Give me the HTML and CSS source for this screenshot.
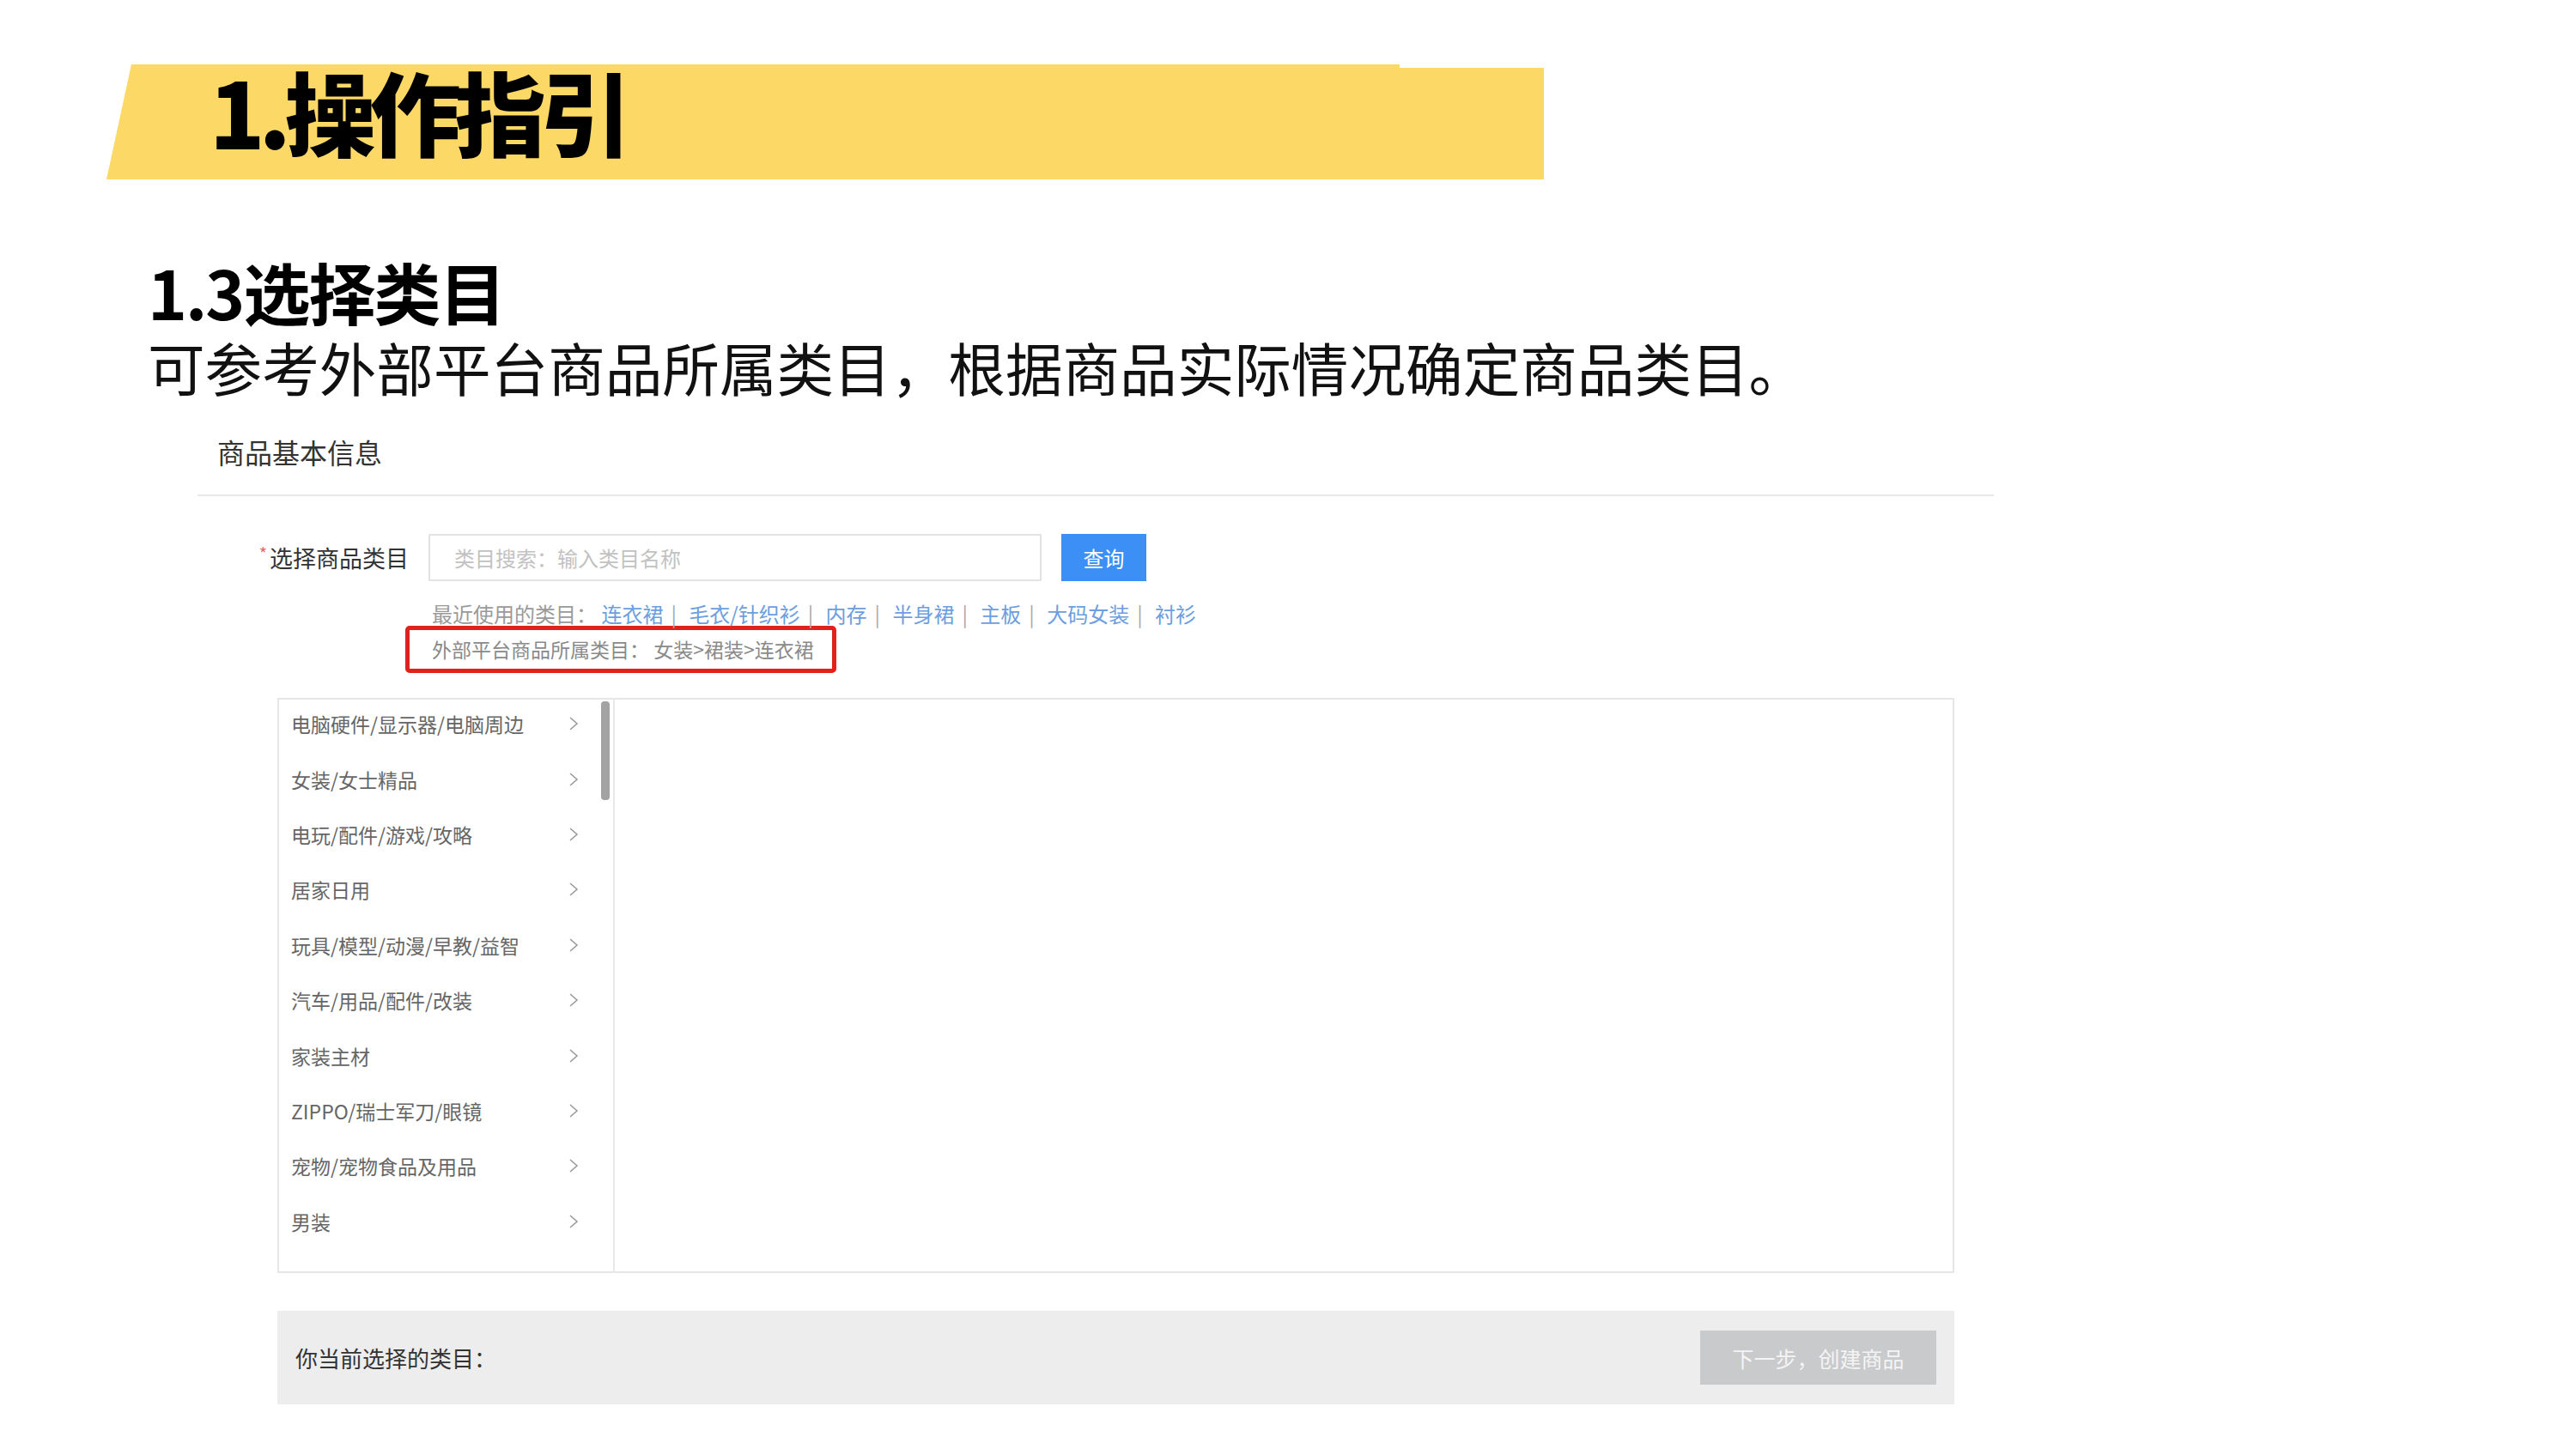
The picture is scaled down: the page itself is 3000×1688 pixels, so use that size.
FILE: index.html
```html
<!DOCTYPE html>
<html lang="zh-CN">
<head>
    <meta charset="UTF-8">
    <meta name="viewport" content="width=device-width, initial-scale=1.0">
    <title>1.操作指引</title>
    <link rel="stylesheet" href="styles.css">
</head>
<body>
    <div class="slide">
        <div class="banner">
            <h1>1.操作指引</h1>
        </div>

        <div class="section">
            <h2>1.3选择类目</h2>
            <p class="desc">可参考外部平台商品所属类目，根据商品实际情况确定商品类目。</p>
        </div>

        <div class="shot">
            <div class="shot-header">商品基本信息</div>

            <div class="form-row">
                <label class="form-label"><span class="star">*</span>选择商品类目</label>
                <input type="text" class="search-input" placeholder="类目搜索：输入类目名称" readonly>
                <button class="search-btn">查询</button>
            </div>

            <div class="hints">
                <div class="recent">
                    最近使用的类目：
                    <a>连衣裙</a><span class="sep">|</span>
                    <a>毛衣/针织衫</a><span class="sep">|</span>
                    <a>内存</a><span class="sep">|</span>
                    <a>半身裙</a><span class="sep">|</span>
                    <a>主板</a><span class="sep">|</span>
                    <a>大码女装</a><span class="sep">|</span>
                    <a>衬衫</a>
                </div>
                <div class="outer-cat">外部平台商品所属类目： 女装&gt;裙装&gt;连衣裙</div>
            </div>

            <div class="panel">
                <div class="cat-col">
                    <ul class="cat-list">
                        <li>电脑硬件/显示器/电脑周边<svg class="chev" viewBox="0 0 12 20"><path d="M2 3 L10 10 L2 17"/></svg></li>
                        <li>女装/女士精品<svg class="chev" viewBox="0 0 12 20"><path d="M2 3 L10 10 L2 17"/></svg></li>
                        <li>电玩/配件/游戏/攻略<svg class="chev" viewBox="0 0 12 20"><path d="M2 3 L10 10 L2 17"/></svg></li>
                        <li>居家日用<svg class="chev" viewBox="0 0 12 20"><path d="M2 3 L10 10 L2 17"/></svg></li>
                        <li>玩具/模型/动漫/早教/益智<svg class="chev" viewBox="0 0 12 20"><path d="M2 3 L10 10 L2 17"/></svg></li>
                        <li>汽车/用品/配件/改装<svg class="chev" viewBox="0 0 12 20"><path d="M2 3 L10 10 L2 17"/></svg></li>
                        <li>家装主材<svg class="chev" viewBox="0 0 12 20"><path d="M2 3 L10 10 L2 17"/></svg></li>
                        <li>ZIPPO/瑞士军刀/眼镜<svg class="chev" viewBox="0 0 12 20"><path d="M2 3 L10 10 L2 17"/></svg></li>
                        <li>宠物/宠物食品及用品<svg class="chev" viewBox="0 0 12 20"><path d="M2 3 L10 10 L2 17"/></svg></li>
                        <li>男装<svg class="chev" viewBox="0 0 12 20"><path d="M2 3 L10 10 L2 17"/></svg></li>
                    </ul>
                    <div class="scroll-track"><div class="thumb"></div></div>
                </div>
                <div class="sub-col"></div>
            </div>

            <div class="bottom-bar">
                <span>你当前选择的类目：</span>
                <button class="next-btn">下一步，创建商品</button>
            </div>
        </div>
    </div>
</body>
</html>
```

FILE: styles.css
```css
body {
    margin: 0;
    background-color: #fff;
    font-family: "Noto Sans CJK SC", "Noto Sans", sans-serif;
}
.slide {
    width: 3000px;
    height: 1688px;
    overflow: hidden;
    background-color: #fff;
}

/* top title banner */
.banner {
    margin: 75px 0 0 124px;
    width: 1674px;
    height: 134px;
    background-color: #fcd866;
    clip-path: polygon(29px 0, 1506px 0, 1506px 4px, 100% 4px, 100% 100%, 0 100%);
    display: flex;
    align-items: flex-start;
}
.banner h1 {
    margin: 0 0 0 120px;
    font-size: 106px;
    font-weight: 900;
    letter-spacing: -7px;
    line-height: 1;
    color: #000;
}

.section {
    padding-left: 172px;
}
.section h2 {
    margin: 85px 0 0;
    font-size: 78px;
    line-height: 90px;
    font-weight: 700;
    letter-spacing: -2px;
    color: #000;
}
.desc {
    margin: 3px 0 0;
    font-size: 66.6px;
    line-height: 80px;
    color: #111;
}

/* embedded screenshot */
.shot {
    margin-left: 230px;
    width: 2092px;
}
.shot-header {
    margin-top: 34px;
    padding: 0 0 25px 23px;
    font-size: 32px;
    line-height: 50px;
    color: #333;
    border-bottom: 2px solid #e8e8e8;
}
.form-row {
    margin-top: 44px;
    display: flex;
    align-items: center;
}
.form-label {
    width: 246px;
    text-align: right;
    font-size: 27px;
    color: #333;
}
.star {
    color: #e86a6a;
    font-size: 20px;
    vertical-align: top;
    margin-right: 3px;
}
.search-input {
    margin-left: 23px;
    width: 714px;
    height: 55px;
    box-sizing: border-box;
    border: 2px solid #e3e3e3;
    padding: 0 28px;
    font-family: inherit;
    font-size: 24px;
    outline: none;
}
.search-input::placeholder {
    color: #c2c2c2;
}
.search-btn {
    margin-left: 23px;
    width: 99px;
    height: 55px;
    border: none;
    background-color: #3b8ff5;
    color: #fff;
    font-family: inherit;
    font-size: 24px;
}

.hints {
    margin-left: 242px;
}
.recent {
    margin-top: 23px;
    padding-left: 31px;
    font-size: 24px;
    line-height: 30px;
    color: #9a9a9a;
}
.recent a {
    color: #6c9ee0;
}
.recent .sep {
    margin: 0 9px;
    color: #aaa;
}
.outer-cat {
    margin-top: -1px;
    width: 502px;
    height: 55px;
    box-sizing: border-box;
    border: 5px solid #e3211c;
    border-radius: 5px;
    padding-left: 26px;
    font-size: 23px;
    line-height: 45px;
    color: #8a8a8a;
}

.panel {
    margin: 29px 0 0 93px;
    width: 1953px;
    height: 670px;
    box-sizing: border-box;
    border: 2px solid #e6e6e6;
    display: flex;
}
.cat-col {
    width: 389px;
    border-right: 2px solid #e8e8e8;
    display: flex;
}
.cat-list {
    list-style: none;
    margin: -4px 0 0;
    padding: 0;
    flex: 1;
}
.cat-list li {
    height: 64.4px;
    padding: 0 26px 0 14px;
    display: flex;
    align-items: center;
    justify-content: space-between;
    font-size: 23px;
    color: #666;
}
.chev {
    width: 12px;
    height: 20px;
    fill: none;
    stroke: #9a9a9a;
    stroke-width: 1.6;
}
.scroll-track {
    width: 14px;
    padding-top: 2px;
}
.thumb {
    width: 10px;
    height: 115px;
    border-radius: 4px;
    background-color: #a3a3a3;
}
.sub-col {
    flex: 1;
}

.bottom-bar {
    margin: 44px 0 0 93px;
    width: 1953px;
    height: 109px;
    box-sizing: border-box;
    padding: 0 21px;
    background-color: #ededed;
    display: flex;
    align-items: center;
    justify-content: space-between;
    font-size: 26px;
    color: #333;
}
.next-btn {
    width: 275px;
    height: 63px;
    border: none;
    background-color: #c9cacc;
    color: #f4f4f4;
    font-family: inherit;
    font-size: 25px;
}
```
